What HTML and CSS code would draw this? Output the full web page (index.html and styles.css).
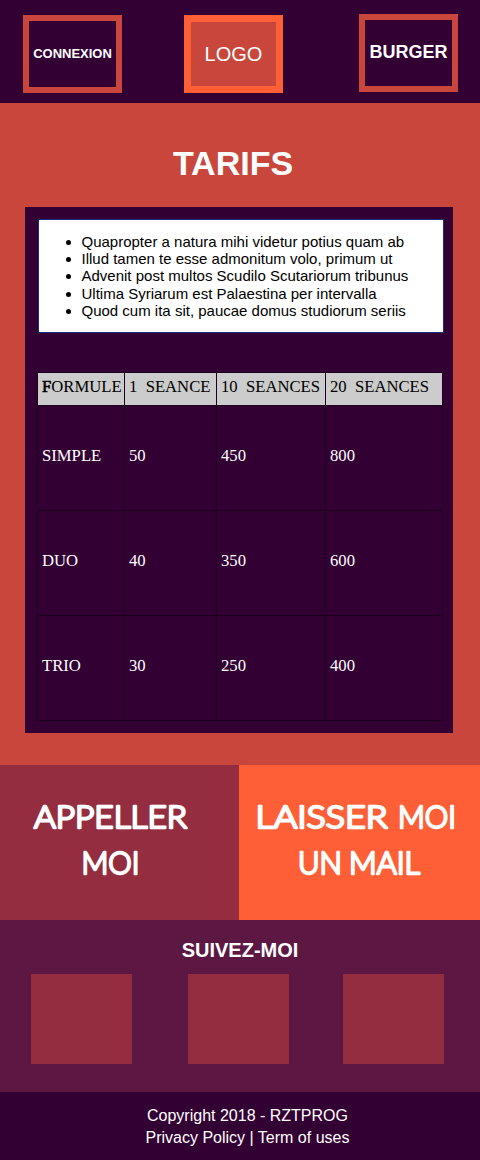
FILE: index.html
```html
<!DOCTYPE html>
<html lang="fr">
<head>
<meta charset="utf-8">
<title>Tarifs</title>
<link rel="stylesheet" href="styles.css">
</head>
<body>
<header class="header">
  <a class="box connexion">CONNEXION</a>
  <a class="box logo">LOGO</a>
  <a class="box burger">BURGER</a>
</header>
<main class="main">
  <h1 class="title">TARIFS</h1>
  <section class="panel">
    <ul class="notes">
      <li>Quapropter a natura mihi videtur potius quam ab</li>
      <li>Illud tamen te esse admonitum volo, primum ut</li>
      <li>Advenit post multos Scudilo Scutariorum tribunus</li>
      <li>Ultima Syriarum est Palaestina per intervalla</li>
      <li>Quod cum ita sit, paucae domus studiorum seriis</li>
    </ul>
    <table class="prices">
      <colgroup><col class="col-name"><col class="col-one"><col class="col-ten"><col class="col-twenty"></colgroup>
      <thead>
        <tr><th><span class="initial">F</span>ORMULE</th><th>1&nbsp; SEANCE</th><th>10&nbsp; SEANCES</th><th>20&nbsp; SEANCES</th></tr>
      </thead>
      <tbody>
        <tr><td>SIMPLE</td><td>50</td><td>450</td><td>800</td></tr>
        <tr><td>DUO</td><td>40</td><td>350</td><td>600</td></tr>
        <tr><td>TRIO</td><td>30</td><td>250</td><td>400</td></tr>
      </tbody>
    </table>
  </section>
</main>
<nav class="actions">
  <a class="action call">
    <svg class="lettering" width="238" height="155" viewBox="0 0 238 155">
      <text x="34" y="62.5" textLength="153" lengthAdjust="spacingAndGlyphs">APPELLER</text>
      <text x="81.5" y="108.5" textLength="58" lengthAdjust="spacingAndGlyphs">MOI</text>
    </svg>
  </a>
  <a class="action mail">
    <svg class="lettering" width="241" height="155" viewBox="0 0 241 155">
      <text x="16.5" y="62.5" textLength="132" lengthAdjust="spacingAndGlyphs">LAISSER</text>
      <text x="159" y="62.5" textLength="58" lengthAdjust="spacingAndGlyphs">MOI</text>
      <text x="59" y="108.5" textLength="44" lengthAdjust="spacingAndGlyphs">UN</text>
      <text x="110" y="108.5" textLength="71" lengthAdjust="spacingAndGlyphs">MAIL</text>
    </svg>
  </a>
</nav>
<section class="social">
  <h2 class="social-title">SUIVEZ-MOI</h2>
  <div class="tiles"><span class="tile"></span><span class="tile"></span><span class="tile"></span></div>
</section>
<footer class="footer">
  <p>Copyright 2018 - RZTPROG</p>
  <p>Privacy Policy | Term of uses</p>
</footer>
</body>
</html>
```
FILE: styles.css
```css
* { box-sizing: border-box; }
body {
  margin: 0;
  width: 480px;
  height: 1160px;
  overflow: hidden;
  background: #330033;
  color: #fff;
  font-family: "Liberation Sans", Arial, sans-serif;
}
.header {
  display: flex;
  justify-content: space-between;
  height: 103.3px;
  padding: 15px 22px 0 23px;
}
.box {
  display: flex;
  align-items: center;
  justify-content: center;
  width: 99px;
  height: 77.5px;
  border: 6px solid #c8463c;
  white-space: nowrap;
}
.connexion { font-size: 13px; font-weight: bold; }
.logo { border: 7px solid #ff5f36; background: #c8463c; font-size: 20px; margin-right: 14px; padding-top: 2px; }
.burger { margin-top: -1px; font-size: 18px; font-weight: bold; }
.main {
  height: 662px;
  padding: 40px 27px 0 24.5px;
  background: #c8463c;
}
.title {
  margin: 0 0 24px;
  padding-right: 11.5px;
  font-size: 34px;
  line-height: 40px;
  text-align: center;
}
.panel {
  width: 428.5px;
  height: 525.3px;
  padding: 12px 9px 0 13px;
  background: #330033;
}
.notes {
  width: 406px;
  height: 114px;
  margin: 0 0 39px;
  padding: 12.6px 0 0 43px;
  border: 1px solid #183080;
  background: #fff;
  color: #000;
  font-size: 15px;
  line-height: 17.25px;
  white-space: nowrap;
}
.prices {
  width: 405px;
  margin-left: -0.5px;
  border-collapse: collapse;
  table-layout: fixed;
  font-family: "Liberation Serif", "Times New Roman", serif;
  font-size: 16.67px;
  line-height: 19px;
}
.col-name { width: 87px; }
.col-one { width: 92px; }
.col-ten { width: 109px; }
.col-twenty { width: 117px; }
.prices th, .prices td {
  border: 1px solid #1d001d;
  padding: 0 0 0 4px;
  text-align: left;
  font-weight: normal;
  white-space: nowrap;
}
.prices th {
  height: 33px;
  padding-bottom: 6px;
  background: #ccc;
  color: #000;
}
.initial { -webkit-text-stroke: 0.6px #000; }
.prices td { height: 105px; padding-bottom: 6px; }
.actions {
  display: flex;
  height: 155px;
}
.action { overflow: hidden; }
.call { width: 238.7px; background: #952d40; }
.mail { flex: 1; background: #ff5f36; }
.lettering {
  display: block;
  fill: #fff;
  stroke: #fff;
  stroke-width: 2.4px;
  stroke-linejoin: round;
  font-family: Lato, sans-serif;
  font-size: 31px;
  font-weight: 300;
}
.social {
  height: 171.7px;
  padding: 18px 36px 0 31px;
  background: #5c1843;
}
.social-title {
  margin: 0 0 12px;
  padding-left: 5px;
  font-size: 20px;
  line-height: 24px;
  text-align: center;
}
.tiles { display: grid; grid-template-columns: 157px 155px 101px; }
.tile { width: 101px; height: 90px; background: #952d40; }
.footer {
  padding: 13px 0 0 15px;
  font-size: 16px;
  line-height: 22px;
  text-align: center;
}
.footer p { margin: 0; }
```
